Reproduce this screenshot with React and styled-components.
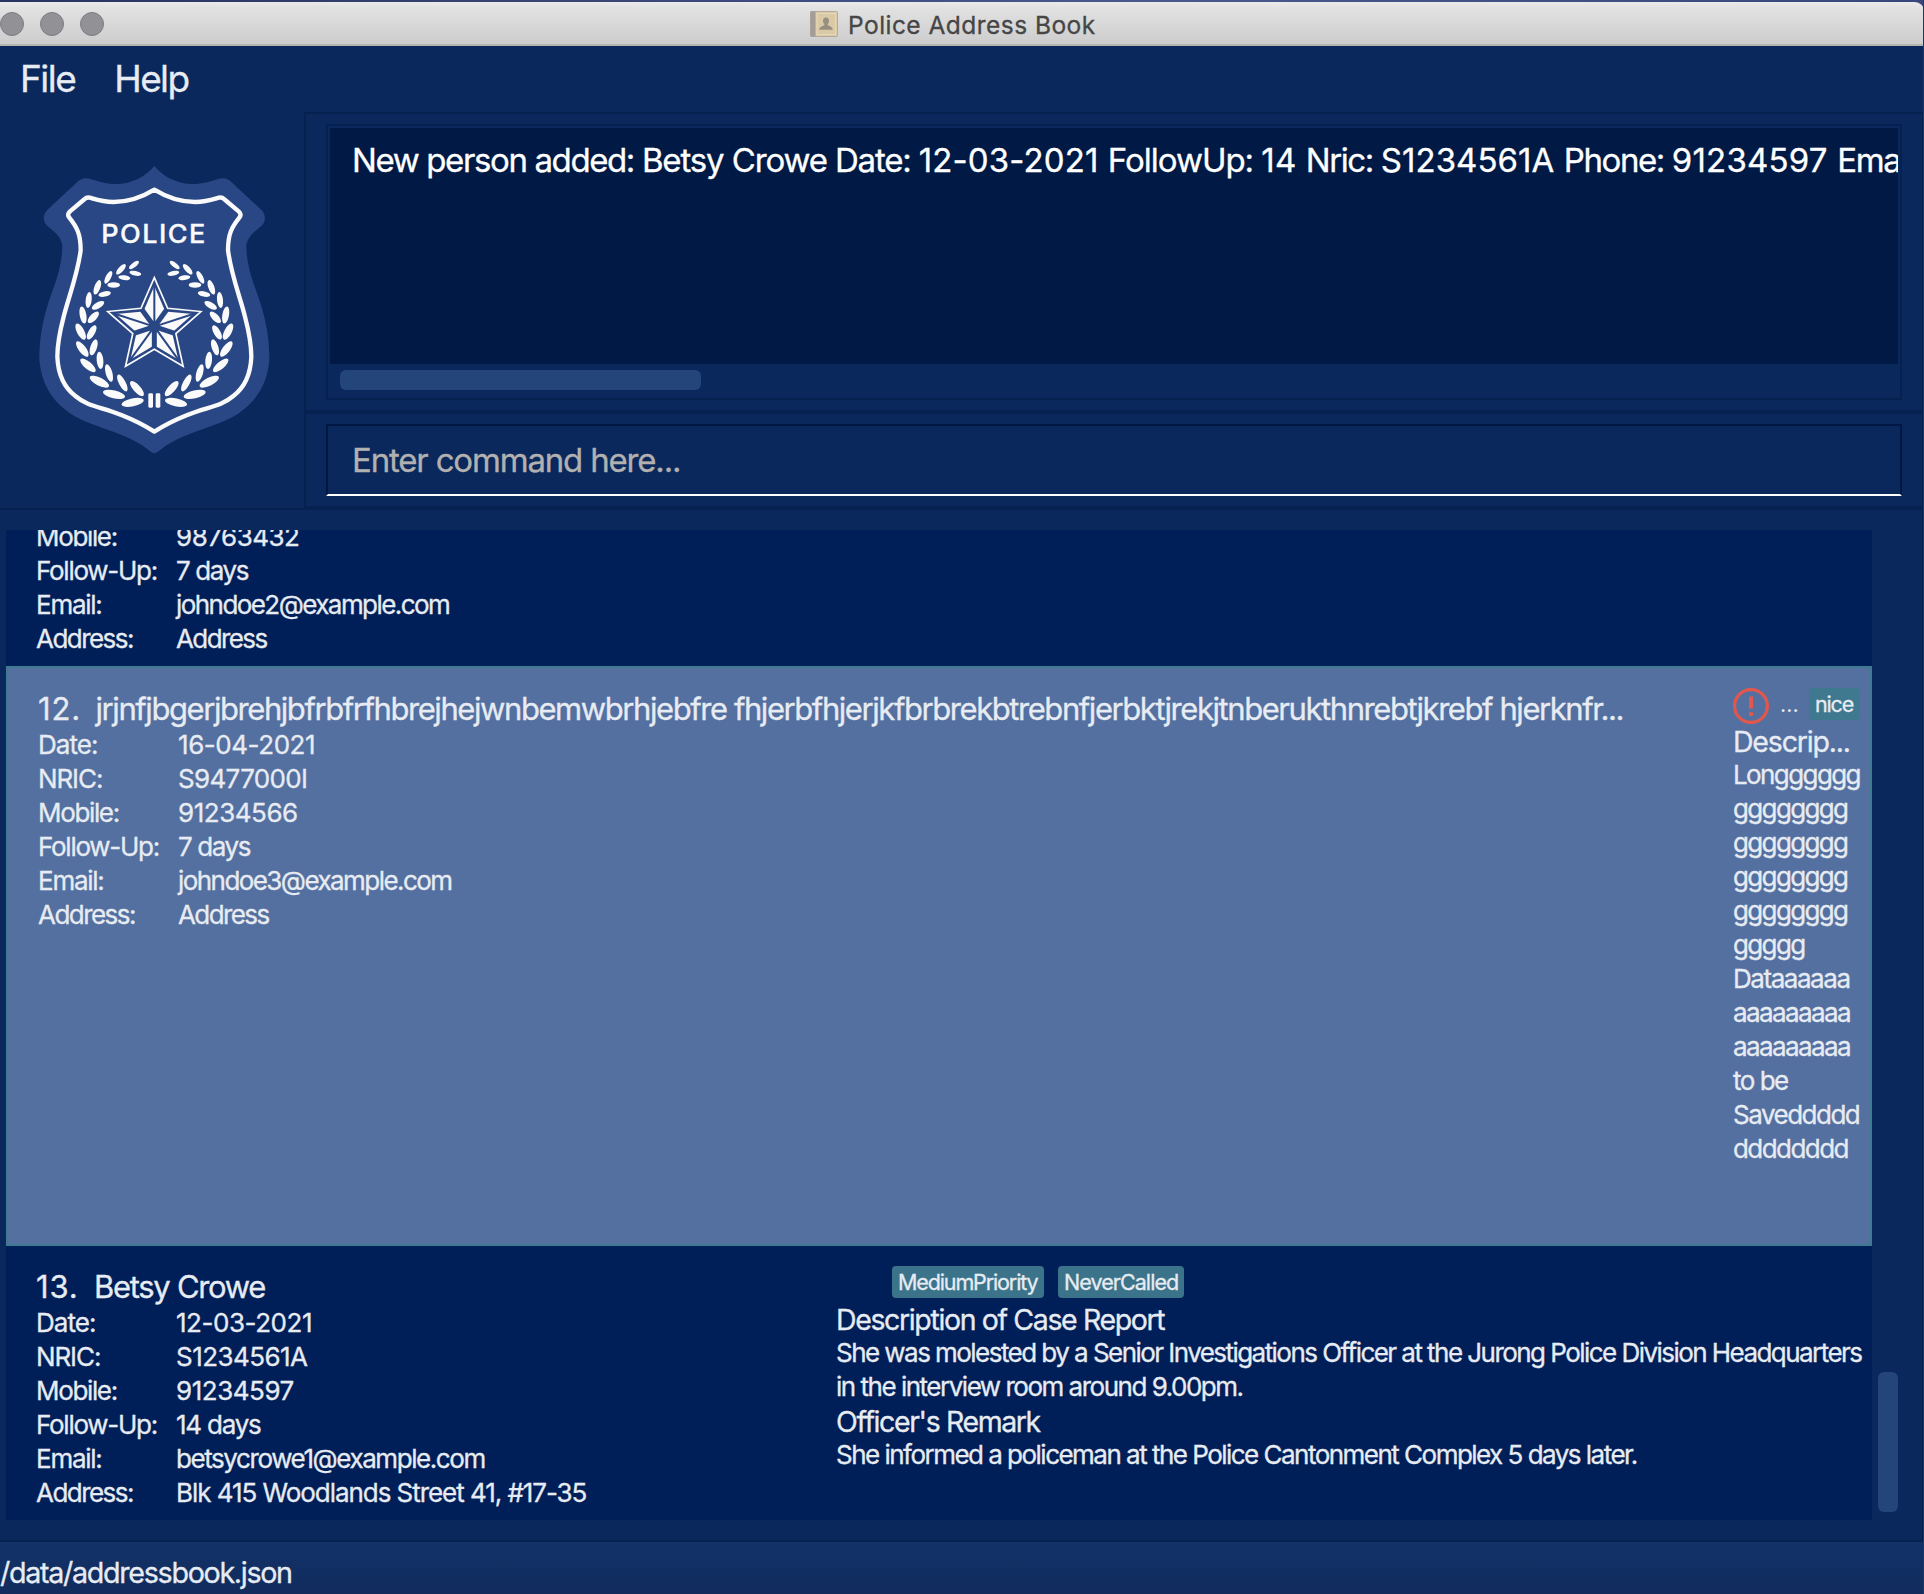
import React from "react";
import styled, { createGlobalStyle } from "styled-components";

const GlobalStyle = createGlobalStyle`
  * { box-sizing: border-box; }
  body { margin: 0; background: #0a285c; font-family: Inter, "Liberation Sans", sans-serif; }
`;

const Window = styled.div`
  display: flex; flex-direction: column; width: 1924px; height: 1594px; overflow: hidden;
  background: #0a285c; border-right: 1px solid #1c3868; color: #e7ebf2;
`;
const Desktop = styled.div`
  height: 46px; margin-right: -1px; padding-top: 2px; background: linear-gradient(90deg, #26335f, #4a588c 60%, #38467c);
`;
const TitleBar = styled.header`
  display: flex; align-items: center; height: 44px; border-bottom: 2px solid #b4b4b1;
  border-top-right-radius: 9px; background: linear-gradient(#ebebeb, #e2e2e2 12%, #cdcdcd);
`;
const Lights = styled.div`display: flex; gap: 16px; padding-top: 2px;`;
const Light = styled.span`
  width: 24px; height: 24px; border-radius: 50%; background: #929196; border: 1px solid #7c7b80;
`;
const Title = styled.div`
  display: flex; align-items: center; gap: 10px; margin-left: 706px; padding-top: 3px;
  font-size: 24.5px; line-height: 42px; color: #464646;
`;
const MenuBar = styled.nav`
  display: flex; gap: 39px; height: 66px; padding-left: 20px; font-size: 37px; line-height: 66px;
`;
const Track = styled.span`
  letter-spacing: ${(p) => p.$ls}px; -webkit-text-stroke: 0.3px currentColor;
`;

const Top = styled.section`display: flex; height: 396px;`;
const BadgePane = styled.div`flex: none; width: 304px; padding: 38px 0 0 20px;`;
const Right = styled.div`display: flex; flex-direction: column; flex: 1; min-width: 0;`;
const Pane = styled.div`
  height: ${(p) => p.$h}px; padding: 10px 20px; border: 2px solid #04214f; border-right-width: 1px;
`;
const Result = styled.div`height: 276px; padding: 2px 2px 0; border: 2px solid #04214f;`;
const ResultText = styled.div`
  height: 236px; padding: 12px 0 0 22px; overflow: hidden; white-space: pre;
  background: #001a45; color: #fff; font-size: 33px; line-height: 40px;
`;
const HThumb = styled.div`width: 361px; height: 20px; margin: 6px 0 0 10px; border-radius: 6px; background: #24457a;`;
const Command = styled.div`
  height: 72px; padding-left: 24px; border: 2px solid #001743; border-bottom-color: #fff;
  font-size: 33px; line-height: 68px; color: #b2b1b0;
`;

const ListPane = styled.main`
  display: flex; height: 1032px; padding: 20px 0 20px 6px; border-top: 2px solid #04214f; border-right: 1px solid #04214f;
`;
const List = styled.div`width: 1866px; height: 990px; background: #001f58; overflow: hidden;`;
const ScrollBar = styled.div`flex: 1; padding: 842px 0 0 6px;`;
const VThumb = styled.div`width: 20px; height: 140px; border-radius: 6px; background: #24457a;`;

const Card = styled.article`
  display: flex; justify-content: space-between; height: ${(p) => p.$h}px; overflow: hidden;
  background: ${(p) => (p.$selected ? "#5470a0" : "#001f58")};
  border: ${(p) => (p.$selected ? "2px solid #3e7b91" : "0")};
  align-items: ${(p) => (p.$tail ? "flex-end" : "flex-start")};
`;
const Person = styled.div`padding: ${(p) => (p.$tail ? "0 0 10.5px" : "21.5px 0 0")} 30px;`;
const Name = styled.h2`
  display: grid; grid-template-columns: ${(p) => p.$indent}px auto; margin: 0; font-size: 31px; font-weight: 400;
  line-height: 38px; white-space: pre;
`;
const Field = styled.div`
  display: grid; grid-template-columns: 140px auto; font-size: 26px; line-height: 34px; white-space: nowrap;
`;
const Report = styled.div`width: ${(p) => p.$w}px; padding-top: 20px; white-space: pre;`;
const Tags = styled.div`display: flex; gap: ${(p) => p.$gap}px; height: 36px; padding-left: ${(p) => p.$pad}px;`;
const Tag = styled.span`
  width: ${(p) => p.$w}px; height: 32px; padding-left: 6px; border-radius: 4px;
  background: ${(p) => (p.$bare ? "transparent" : p.$selected ? "#3f7990" : "#3b748a")}; font-size: 21.5px; line-height: 32px;
`;
const Heading = styled.h3`margin: 0; padding-top: 2px; font-size: 28.5px; font-weight: 400; line-height: 32px;`;
const Text = styled.div`font-size: 26px; line-height: 34px;`;
const Footer = styled.footer`
  height: 54px; padding-top: 9px; border-top: 2px solid #04214f; background: linear-gradient(#123268, #112c5d);
  font-size: 28.7px; line-height: 44px;
`;

const BookIcon = () => (
  <svg width="28" height="27" viewBox="0 0 28 27">
    <rect x="0.5" y="0.5" width="27" height="25" rx="1" fill="#d9c9a4" stroke="#b3aa98" />
    <rect x="0.5" y="0.5" width="5" height="25" fill="#a39c98" />
    <rect x="7" y="2.5" width="18.5" height="21" fill="none" stroke="#e3d8bd" />
    <path d="M16 6.500c2 0 3 1.400 3 3.200 0 1.600-.6 2.700-1.300 3.400v1.200c1.600.8 4.800 1.400 5.100 4.500H9.200c.3-3.100 3.500-3.700 5.100-4.500v-1.200c-.7-.7-1.300-1.800-1.300-3.400 0-1.800 1-3.200 3-3.200z" fill="#978f80" />
  </svg>
);
const AlertIcon = () => (
  <svg width="36" height="36" viewBox="0 0 36 36">
    <circle cx="18" cy="18" r="16.4" fill="none" stroke="#e2574c" strokeWidth="3.2" />
    <rect x="16" y="8.5" width="4" height="12" fill="#e2574c" />
    <rect x="16" y="24" width="4" height="4" rx="1" fill="#e2574c" />
  </svg>
);

// Laurel leaves of the left branch: centre, rotation, half length, half width.
const leaves = [
  [342, 345, -38, 18, 7], [303, 358, -48, 20, 8], [265, 382, -62, 21, 8], [232, 412, -70, 23, 9],
  [206, 450, -84, 24, 9], [189, 495, 80, 26, 10], [182, 545, 62, 27, 11], [187, 597, 53, 28, 11],
  [204, 646, 40, 29, 11], [238, 695, 27, 32, 12], [282, 733, 13, 34, 12], [338, 757, -12, 34, 12],
  [346, 370, 12, 18, 7], [313, 383, 8, 18, 7], [281, 405, 0, 19, 8], [254, 432, -12, 19, 8],
  [234, 466, -30, 21, 9], [220, 502, -46, 22, 10], [215, 547, -60, 24, 10], [221, 592, -72, 25, 10],
  [240, 631, 84, 26, 10], [267, 669, 74, 27, 10], [307, 699, 62, 28, 10], [351, 716, 48, 29, 11],
];
const tips = [0, 1, 2, 3, 4].map((i) => (i * 72 - 90) * (Math.PI / 180));
const polar = (r, a) => [403 + r * Math.cos(a), 530 + r * Math.sin(a)];
const star = (R, r) =>
  tips.flatMap((a) => [polar(R, a), polar(r, a + Math.PI / 5)]).map((p) => p.map((v) => v.toFixed(1)).join(",")).join(" ");

const Branch = () => leaves.map(([x, y, a, l, w], i) => (
  <ellipse key={i} cx={x} cy={y} rx={l} ry={w} transform={`rotate(${a} ${x} ${y})`} fill="#fafafb" />
));
const OUTER = "M403 48C430 80 470 102 518 102C550 102 575 93 596 86C612 82 622 86 631 93L722 178C735 191 738 204 731 220C716 240 688 248 679 284C678 350 705 410 722 462C740 520 748 570 748 630C742 700 712 745 672 778C630 812 590 822 530 844C470 866 440 884 413 906Q403 913 393 906C366 884 336 866 276 844C216 822 176 812 134 778C94 745 64 700 58 630C58 570 66 520 84 462C101 410 128 350 127 284C118 248 90 240 75 220C68 204 71 191 84 178L175 93C184 86 194 82 210 86C231 93 256 102 288 102C336 102 376 80 403 48Z";
const INNER = "M403 119C450 148 490 156 525 156C560 156 580 148 597 143Q606 141 612 147L656 184Q666 193 658 203C635 232 624 252 624 300C632 370 660 440 675 500C688 550 694 580 694 620C692 670 677 710 640 738C600 772 560 770 500 796C460 812 430 828 403 845C376 828 346 812 306 796C246 770 206 772 166 738C129 710 114 670 112 620C112 580 118 550 131 500C146 440 174 370 182 300C182 252 171 232 148 203Q140 193 150 184L194 147Q200 141 209 143C226 148 246 156 281 156C316 156 356 148 403 119Z";
const Badge = () => (
  <svg width="270" height="320" viewBox="0 0 810 960">
    <path d={OUTER} fill="#2a4785" />
    <path d={INNER} fill="none" stroke="#fafafb" strokeWidth="13" strokeLinejoin="round" />
    <text x="244" y="279" fontSize="76" fontWeight="500" fill="#fafafb" stroke="#fafafb" strokeWidth="1" textLength="316" lengthAdjust="spacingAndGlyphs" letterSpacing="4">POLICE</text>
    <Branch />
    <g transform="translate(806 0) scale(-1 1)"><Branch /></g>
    <rect x="385" y="730" width="14" height="43" rx="4" fill="#fafafb" />
    <rect x="407" y="730" width="14" height="43" rx="4" fill="#fafafb" />
    <polygon points={star(147, 68)} fill="none" stroke="#fafafb" strokeWidth="5" />
    <polygon points={star(122, 56)} fill="#fafafb" />
    {tips.map((a, i) => {
      const [x1, y1] = polar(125, a);
      const [x2, y2] = polar(62, a + Math.PI / 5);
      return (
        <g key={i} stroke="#2a4785">
          <line x1="403" y1="530" x2={x1} y2={y1} strokeWidth="6" />
          <line x1="403" y1="530" x2={x2} y2={y2} strokeWidth="15" />
        </g>
      );
    })}
    <circle cx="403" cy="530" r="17" fill="#2a4785" />
  </svg>
);

// Each entry is a piece of text and its letter spacing; digits are set wider than words.
const message = [
  ["New person added: ", -1.385], ["Betsy Crowe ", -1.13], ["Date: ", -1.2], ["12-03-2021 ", 0.13], ["FollowUp: ", -1.02],
  ["14 ", 0.12], ["Nric: ", -1.4], ["S1234561A ", 0.05], ["Phone: ", -1.4], ["91234597 ", 0.2],
  ["Email: betsycrowe1@example.com", -1.3],
];
const LABELS = { "Date:": -0.95, "NRIC:": -1.1, "Mobile:": -1.35, "Follow-Up:": -1.27, "Email:": -1.25, "Address:": -1.55 };
const NAME = "jrjnfjbgerjbrehjbfrbfrfhbrejhejwnbemwbrhjebfre fhjerbfhjerjkfbrbrekbtrebnfjerbktjrekjtnberukthnrebtjkrebf hjerknfr...";
const fields11 = [
  ["Mobile:", "98763432", -0.49], ["Follow-Up:", "7 days", -1.4], ["Email:", "johndoe2@example.com", -1.56],
  ["Address:", "Address", -1.6],
];
const fields12 = [
  ["Date:", "16-04-2021", -0.45], ["NRIC:", "S9477000I", -0.66], ["Mobile:", "91234566", -0.47],
  ["Follow-Up:", "7 days", -1.4], ["Email:", "johndoe3@example.com", -1.56], ["Address:", "Address", -1.6],
];
const fields13 = [
  ["Date:", "12-03-2021", -0.46], ["NRIC:", "S1234561A", -0.55], ["Mobile:", "91234597", -0.46],
  ["Follow-Up:", "14 days", -1.22], ["Email:", "betsycrowe1@example.com", -1.42],
  ["Address:", "Blk 415 Woodlands Street 41, #17-35", -1.05],
];
const notes = [
  ["Longggggg", -1.6], ["gggggggg", -1.65], ["gggggggg", -1.65], ["gggggggg", -1.65], ["gggggggg", -1.65], ["ggggg", -1.65],
  ["Dataaaaaa", -1.45], ["aaaaaaaaa", -1.6], ["aaaaaaaaa", -1.6], ["to be", -1.5], ["Saveddddd", -1.5], ["dddddddd", -1.55],
];

const Fields = ({ rows }) => rows.map(([k, v, ls]) => (
  <Field key={k}><Track $ls={LABELS[k]}>{k}</Track><Track $ls={ls}>{v}</Track></Field>
));

export default function App() {
  return (
    <Window>
      <GlobalStyle />
      <Desktop>
        <TitleBar>
          <Lights><Light /><Light /><Light /></Lights>
          <Title><BookIcon /><Track $ls={0.46}>Police Address Book</Track></Title>
        </TitleBar>
      </Desktop>
      <MenuBar><Track $ls={-1.5}>File</Track><Track $ls={-1.65}>Help</Track></MenuBar>
      <Top>
        <BadgePane><Badge /></BadgePane>
        <Right>
          <Pane $h={300}>
            <Result>
              <ResultText>{message.map(([t, ls]) => <Track key={t} $ls={ls}>{t}</Track>)}</ResultText>
              <HThumb />
            </Result>
          </Pane>
          <Pane $h={96}><Command><Track $ls={-1.18}>Enter command here...</Track></Command></Pane>
        </Right>
      </Top>
      <ListPane>
        <List>
          <Card $h={136} $tail><Person $tail><Fields rows={fields11} /></Person></Card>
          <Card $h={580} $selected>
            <Person>
              <Name $indent={57.5}><Track $ls={0.9}>12.</Track><Track $ls={-1.43}>{NAME}</Track></Name>
              <Fields rows={fields12} />
            </Person>
            <Report $w={137}>
              <Tags $gap={5} $pad={0}>
                <AlertIcon />
                <Tag $bare $w={30}>...</Tag>
                <Tag $selected $w={51}><Track $ls={-1.16}>nice</Track></Tag>
              </Tags>
              <Heading><Track $ls={-1.2}>Descrip...</Track></Heading>
              {notes.map(([n, ls], i) => <Text key={i}><Track $ls={ls}>{n}</Track></Text>)}
            </Report>
          </Card>
          <Card $h={274}>
            <Person>
              <Name $indent={58}><Track $ls={0.9}>13.</Track><Track $ls={-1.3}>Betsy Crowe</Track></Name>
              <Fields rows={fields13} />
            </Person>
            <Report $w={1036}>
              <Tags $gap={14} $pad={56}>
                <Tag $w={152}><Track $ls={-1.13}>MediumPriority</Track></Tag>
                <Tag $w={126}><Track $ls={-0.93}>NeverCalled</Track></Tag>
              </Tags>
              <Heading><Track $ls={-1.37}>Description of Case Report</Track></Heading>
              <Text><Track $ls={-1.545}>She was molested by a Senior Investigations Officer at the Jurong Police Division Headquarters</Track></Text>
              <Text><Track $ls={-1.49}>in the interview room around 9.00pm.</Track></Text>
              <Heading><Track $ls={-1.4}>Officer's Remark</Track></Heading>
              <Text><Track $ls={-1.52}>She informed a policeman at the Police Cantonment Complex 5 days later.</Track></Text>
            </Report>
          </Card>
        </List>
        <ScrollBar><VThumb /></ScrollBar>
      </ListPane>
      <Footer><Track $ls={-1.32}>/data/addressbook.json</Track></Footer>
    </Window>
  );
}
